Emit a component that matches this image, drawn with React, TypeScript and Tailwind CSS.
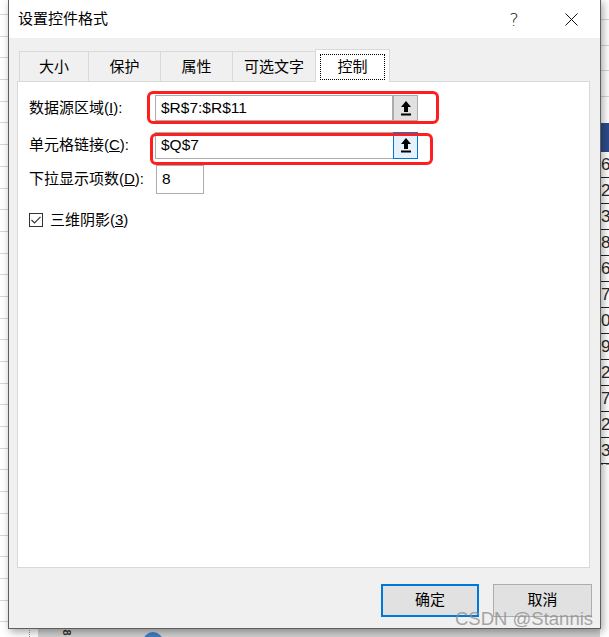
import React from "react";

const UpArrow: React.FC = () => (
  <svg width="12" height="15" viewBox="0 0 12 15">
    <polygon points="6,0 11,6 8,6 8,11 4,11 4,6 1,6" fill="#000" />
    <rect x="1" y="12.5" width="10" height="2" fill="#000" />
  </svg>
);

const tabs = [
  { label: "大小", w: "w-[69px]" },
  { label: "保护", w: "w-[72px]" },
  { label: "属性", w: "w-[72px]" },
  { label: "可选文字", w: "w-[83px]" },
];

const digits = ["6", "2", "3", "8", "6", "7", "0", "9", "2", "7", "2", "3"];

const App: React.FC = () => {
  return (
    <div className="relative w-[609px] h-[637px] overflow-hidden bg-white flex font-['Liberation_Sans','Noto_Sans_CJK_SC',sans-serif] text-black">
      {/* spreadsheet behind the dialog: left edge */}
      <div className="w-[8px] h-full flex flex-col pt-[14px]">
        {Array.from({ length: 29 }).map((_, i) => (
          <div key={i} className="h-[21.7px] shrink-0 border-t border-[#d6d6d6]" />
        ))}
      </div>

      {/* middle, only the bottom band shows */}
      <div className="flex-1 h-full flex flex-col">
        <div className="flex-1" />
        <div className="h-[9px] flex">
          <div className="w-[22px] border-r border-dotted border-[#9a9a9a]" />
          <div className="w-[8px]" />
          <div className="flex-1 bg-[#d2d2d2] flex items-start pl-[25px]">
            <span className="text-[11px] leading-[9px] font-bold text-[#333] rotate-90">8</span>
            <div className="ml-[74px] mt-[4px] w-[20px] h-[20px] rounded-full bg-[#3b7fc6]" />
          </div>
        </div>
      </div>

      {/* right edge of the sheet */}
      <div className="w-[9px] h-full flex flex-col">
        <div className="h-[20px] border-b border-[#d6d6d6]" />
        <div className="h-[26px] border-b border-[#d6d6d6]" />
        <div className="h-[25px] border-b border-[#d6d6d6]" />
        <div className="h-[26px] border-b border-[#d6d6d6]" />
        <div className="h-[26px]" />
        <div className="h-[29px] bg-[#2e4c8c]" />
        {digits.map((d, i) => (
          <div
            key={i}
            className="h-[26px] border-b border-[#222] pl-[1px] text-[17px] leading-[25px] text-[#2a2a2a] overflow-hidden"
          >
            {d}
          </div>
        ))}
        <div className="border-t border-dashed border-[#999]" />
      </div>

      {/* dialog window */}
      <div className="absolute left-[8px] top-[-1px] w-[593px] h-[630px] border border-[#5e5e5e] bg-[#f0f0f0] flex flex-col shadow-[2px_3px_8px_rgba(0,0,0,0.35)]">
        {/* title bar */}
        <div className="h-[38px] bg-white flex items-center justify-between pl-[9px] pr-[6px]">
          <span className="text-[15px]">设置控件格式</span>
          <div className="flex items-center gap-[11px]">
            <span className="w-[46px] text-center text-[18px] text-[#222] font-['DejaVu_Sans',sans-serif] font-light">?</span>
            <div className="w-[46px] flex justify-center">
              <svg width="13" height="13" viewBox="0 0 13 13">
                <path d="M0.5 0.5 L12.5 12.5 M12.5 0.5 L0.5 12.5" stroke="#111" strokeWidth="1" />
              </svg>
            </div>
          </div>
        </div>

        {/* tabs */}
        <div className="flex items-end pl-[10px] mt-[10px] h-[33px] relative z-10">
          {tabs.map((t) => (
            <div
              key={t.label}
              className={`${t.w} h-[30px] border-t border-l border-[#d9d9d9] flex items-center justify-center text-[15px] pt-px`}
            >
              {t.label}
            </div>
          ))}
          <div className="w-[75px] h-[33px] -mb-px bg-white border-t border-l border-r border-[#d9d9d9] p-[4px] pb-[2px]">
            <div className="w-full h-full border border-dotted border-black flex items-center justify-center text-[15px]">
              控制
            </div>
          </div>
        </div>

        {/* panel */}
        <div className="relative ml-[8px] mr-[10px] h-[487px] bg-white border border-[#d9d9d9] pl-[11px] pt-[13px] text-[15px]">
          <div className="flex items-center">
            <span className="w-[126px]">
              数据源区域(<span className="underline">I</span>):
            </span>
            <div className="w-[263px] h-[26px] border border-[#acacac] flex items-stretch">
              <span className="flex-1 pl-[5px] text-[15.5px] leading-[24px]">$R$7:$R$11</span>
              <div className="w-[25px] bg-[#e1e1e1] border-l-2 border-[#adadad] flex items-center justify-center">
                <UpArrow />
              </div>
            </div>
          </div>

          <div className="flex items-center mt-[11px]">
            <span className="w-[126px]">
              单元格链接(<span className="underline">C</span>):
            </span>
            <div className="w-[263px] h-[27px] border border-[#acacac] flex items-stretch">
              <span className="flex-1 pl-[5px] text-[15.5px] leading-[24px]">$Q$7</span>
              <div className="w-[25px] -my-px -mr-px bg-[#e5f1fb] border border-[#0078d7] flex items-center justify-center">
                <UpArrow />
              </div>
            </div>
          </div>

          <div className="flex items-center mt-[6px]">
            <span className="w-[127px]">
              下拉显示项数(<span className="underline">D</span>):
            </span>
            <div className="w-[48px] h-[29px] border border-[#acacac] pl-[5px] text-[15.5px] leading-[26px]">8</div>
          </div>

          <div className="flex items-center mt-[15px] gap-[7px]">
            <div className="w-[14px] h-[14px] border border-[#333] flex items-center justify-center">
              <svg width="10" height="8" viewBox="0 0 10 8">
                <polyline points="0.5,4 3.5,7 9.5,0.8" fill="none" stroke="#333" strokeWidth="1.1" />
              </svg>
            </div>
            <span>
              三维阴影(<span className="underline">3</span>)
            </span>
          </div>

          {/* red highlight marks */}
          <div className="absolute left-[129px] top-[9px] w-[292px] h-[33px] border-[3px] border-[#ff1e1e] rounded-[6px]" />
          <div className="absolute left-[132px] top-[51px] w-[283px] h-[32px] border-[3px] border-[#ff1e1e] rounded-[6px]" />
        </div>

        {/* buttons */}
        <div className="flex justify-end gap-[14px] pr-[8px] mt-[16px]">
          <div className="w-[98px] h-[33px] bg-[#e1e1e1] border-2 border-[#0078d7] flex items-center justify-center text-[15px]">
            确定
          </div>
          <div className="w-[99px] h-[33px] bg-[#e1e1e1] border border-[#adadad] flex items-center justify-center text-[15px]">
            取消
          </div>
        </div>
      </div>

      {/* watermark */}
      <span className="absolute left-[455px] top-[607px] text-[18.5px] leading-[24px] text-[#8f8f8f]/80 z-20">
        CSDN @Stannis
      </span>
    </div>
  );
};

export default App;
